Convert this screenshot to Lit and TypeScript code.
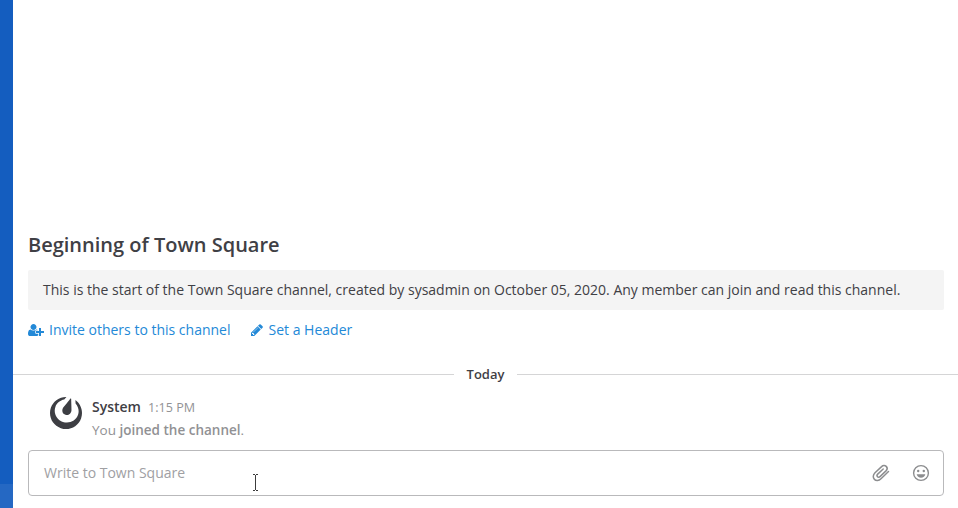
import { LitElement, html, css } from "lit";
import { customElement } from "lit/decorators.js";

@customElement("app-root")
export class AppRoot extends LitElement {
  static styles = css`
    :host {
      display: flex;
      position: relative;
      width: 958px;
      height: 508px;
      overflow: hidden;
      background: #fff;
      color: #3f4045;
      font: 14px/20px "Open Sans", sans-serif;
    }
    .sidebar {
      flex: 0 0 13px;
      display: flex;
      flex-direction: column;
      justify-content: flex-end;
      background: #145dbf;
    }
    .sidebar-foot { height: 24px; background: #2568c3; }
    .channel {
      flex: 1;
      min-width: 0;
      display: flex;
      flex-direction: column;
      justify-content: flex-end;
    }
    .intro { padding: 0 14px 0 15px; }
    h1 { margin: 0 0 11px; font-size: 20px; line-height: 28px; font-weight: 600; }
    h1 span, .note span, .name, .when, .message span, .write, .links span, .day span {
      display: inline-block;
      white-space: nowrap;
    }
    .note {
      height: 40px;
      box-sizing: border-box;
      padding: 10px 15px;
      background: #f4f4f4;
      border-radius: 2px;
    }
    .links { display: flex; margin-top: 10px; gap: 20px; color: #2389d7; }
    .link { display: flex; align-items: center; }
    .link svg { fill: currentColor; display: block; }
    .plus { width: 16px; height: 14px; margin-right: 5px; }
    .pencil { width: 14px; height: 14px; margin-right: 4px; }
    .day {
      display: flex;
      align-items: center;
      height: 20px;
      margin-top: 24px;
      padding-left: 1px;
      gap: 13px;
      font-size: 13px;
      font-weight: 600;
    }
    .day::before, .day::after { content: ""; flex: 1; height: 1px; background: #d5d5d6; }
    .day::before { margin-left: -1px; }
    .post { display: flex; margin: 13px 0 10px 37px; height: 43px; }
    .post svg { width: 32px; height: 32px; fill: #3d3e43; margin-right: 10px; }
    .head { display: flex; align-items: baseline; height: 20px; }
    .name { font-weight: 600; margin-right: 7px; }
    .when { font-size: 12.6px; color: #929295; }
    .message { margin-top: 3px; height: 20px; font-size: 13.5px; color: #919194; }
    .message b { font-weight: 600; }
    .composer {
      display: flex;
      align-items: center;
      box-sizing: border-box;
      height: 46px;
      margin: 0 14px 12px 15px;
      padding: 0 13px 0 15px;
      border: 1px solid #b9b9bb;
      border-radius: 4px;
      color: #a0a0a3;
    }
    .write { flex: 1; }
    .composer svg { width: 18px; height: 18px; display: block; color: #8c8d8f; }
    .clip { margin-right: 22px; }
    .caret { position: absolute; left: 252px; top: 473px; width: 8px; height: 19px; }
  `;

  render() {
    return html`
      <div class="sidebar"><div class="sidebar-foot"></div></div>
      <main class="channel">
        <section class="intro">
          <h1><span>Beginning of Town Square</span></h1>
          <div class="note"><span>This is the start of the Town Square channel, created by sysadmin on October 05, 2020. Any member can join and read this channel.</span></div>
          <div class="links">
            <div class="link">
              <svg class="plus" viewBox="0 0 2048 1792"><path d="M704 896q-159 0-271.500-112.500t-112.500-271.500 112.500-271.500 271.500-112.500 271.500 112.500 112.500 271.500-112.500 271.500-271.500 112.500zm960 128h352q13 0 22.500 9.500t9.500 22.500v192q0 13-9.500 22.500t-22.500 9.500h-352v352q0 13-9.500 22.500t-22.500 9.500h-192q-13 0-22.500-9.500t-9.500-22.500v-352h-352q-13 0-22.500-9.500t-9.500-22.500v-192q0-13 9.500-22.500t22.500-9.500h352v-352q0-13 9.500-22.500t22.500-9.500h192q13 0 22.500 9.500t9.500 22.500v352zm-736 224q0 52 38 90t90 38h256v238q-68 50-171 50h-874q-121 0-194-69t-73-190q0-53 3.500-103.500t14-109 26.500-108.500 43-97.500 62-81 85.500-53.500 111.500-20q19 0 39 17 79 61 154.500 91.500t164.500 30.500 164.500-30.500 154.500-91.500q20-17 39-17 132 0 217 96h-223q-52 0-90 38t-38 90v192z"/></svg>
              <span>Invite others to this channel</span>
            </div>
            <div class="link">
              <svg class="pencil" viewBox="256 0 1536 1792"><path d="M491 1536l91-91-235-235-91 91v107h128v128h107zm523-928q0-22-22-22-10 0-17 7l-542 542q-7 7-7 17 0 22 22 22 10 0 17-7l542-542q7-7 7-17zm-54-192l416 416-832 832h-416v-416zm683 96q0 53-37 90l-166 166-416-416 166-165q36-38 90-38 53 0 91 38l235 234q37 39 37 91z"/></svg>
              <span>Set a Header</span>
            </div>
          </div>
        </section>
        <div class="day"><span>Today</span></div>
        <article class="post">
          <svg viewBox="0 0 24 24"><path d="M12.081 0C7.048-.034 2.339 3.125.637 8.153c-2.125 6.276 1.24 13.086 7.516 15.21 6.276 2.125 13.086-1.24 15.21-7.516 1.727-5.1-.172-10.552-4.311-13.557l.126 2.547c2.065 2.282 2.88 5.512 1.852 8.549-1.534 4.532-6.594 6.915-11.3 5.321-4.708-1.593-7.28-6.559-5.745-11.092 1.031-3.046 3.655-5.121 6.694-5.67l1.642-1.94A4.87 4.87 0 0 0 12.08 0zm3.528 1.094a.284.284 0 0 0-.123.024l-.004.001a.33.33 0 0 0-.109.071c-.145.142-.657.828-.657.828L13.6 3.4l-1.3 1.585-2.232 2.776s-1.024 1.278-.798 2.851c.226 1.574 1.396 2.34 2.304 2.648.907.307 2.302.408 3.438-.704 1.135-1.112 1.098-2.75 1.098-2.75l-.087-3.56-.07-2.05-.047-1.775s.01-.856-.02-1.057a.33.33 0 0 0-.035-.107l-.006-.012-.007-.011a.277.277 0 0 0-.229-.14z"/></svg>
          <div>
            <div class="head"><span class="name">System</span><span class="when">1:15 PM</span></div>
            <div class="message"><span>You <b>joined the channel</b>.</span></div>
          </div>
        </article>
        <div class="composer">
          <span class="write">Write to Town Square</span>
          <svg class="clip" viewBox="0 0 18 18" fill="none" stroke="currentColor" stroke-width="1.5" stroke-linecap="round" stroke-linejoin="round">
            <path d="M16.500 7.500 9 14.800C6.800 17 4 17 2.400 15.400.8 13.800.8 11 3 8.800L9.600 2.600C11 1.200 13 1.200 14.200 2.400 15.400 3.600 15.400 5.500 14 6.900L8 12.600c-.8.8-1.900.8-2.500.1-.7-.7-.6-1.800.2-2.600L11.200 5"/>
          </svg>
          <svg viewBox="0 0 18 18">
            <circle cx="9" cy="9" r="7.400" fill="none" stroke="currentColor" stroke-width="1.400"/>
            <circle cx="6.200" cy="7" r="1.200" fill="currentColor"/>
            <circle cx="11.800" cy="7" r="1.200" fill="currentColor"/>
            <path d="M4.700 10.200h8.600c-.4 2.200-2.200 3.500-4.300 3.500s-3.900-1.300-4.300-3.500z" fill="currentColor"/>
          </svg>
        </div>
      </main>
      <svg class="caret" viewBox="0 0 8 19" fill="none" stroke="#3c3c3c"><path d="M1 1.500h2M4 1.500h2M3.500 2v15M1 17.500h2M4 17.500h2"/></svg>
    `;
  }
}
